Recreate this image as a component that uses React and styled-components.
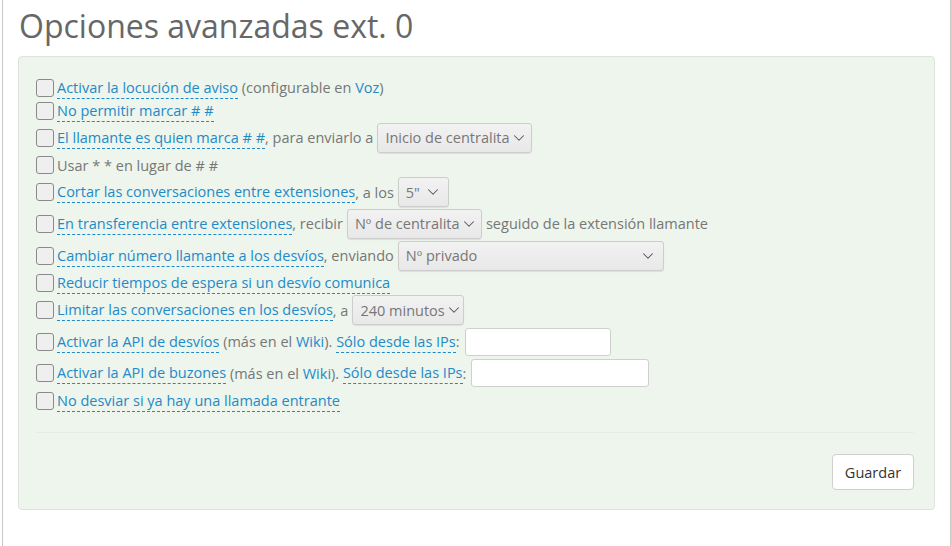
import React from 'react';
import styled, { createGlobalStyle } from 'styled-components';
import { ChevronDown } from 'lucide-react';

const GlobalStyle = createGlobalStyle`
    body {
        margin: 0;
        background: #fff;
        font-family: "Open Sans", "Noto Sans", sans-serif;
    }
`;

const Page = styled.div`
    box-sizing: border-box;
    width: 949px;
    min-height: 546px;
    margin-left: 2px;
    padding: 0 15px;
    border-left: 1px solid #c9c9c9;
    border-right: 1px solid #c9c9c9;
`;

const Title = styled.h1`
    margin: 0;
    padding: 6px 0 10px 1px;
    font-size: 32px;
    line-height: 40px;
    font-weight: 400;
    color: #676767;
`;

const Panel = styled.form`
    display: flex;
    flex-direction: column;
    background: #edf5ec;
    border: 1px solid #dde4dc;
    border-radius: 4px;
    padding: 19px 20px 19px 17px;
`;

const Row = styled.div`
    display: flex;
    align-items: center;
    min-height: ${props => props.tall ? '31.6px' : '23px'};
    font-size: 14.5px;
    color: #777;
`;

const Box = styled.span`
    flex: none;
    box-sizing: border-box;
    width: 18px;
    height: 18px;
    margin-right: 3px;
    border: 1px solid #8a8a8a;
    border-radius: 3px;
    background: #efefef;
`;

const Label = styled.span`
    display: inline-flex;
    align-items: center;
    white-space: pre;
`;

const Link = styled.span`
    color: #1f8ac9;
    border-bottom: ${props => props.plain ? 'none' : '1px dashed #1f8ac9'};
    line-height: 19px;
    padding-bottom: ${props => props.plain ? '0' : '1px'};
    margin-bottom: ${props => props.plain ? '0' : '-1px'};
`;

const Dropdown = styled.span`
    box-sizing: border-box;
    display: inline-flex;
    align-items: center;
    justify-content: space-between;
    width: ${props => props.width}px;
    height: 30px;
    margin: 0 4px 0 4px;
    padding: 0 6px 0 7px;
    border: 1px solid #cdcdcd;
    border-radius: 3px;
    background: linear-gradient(#f2f2f2, #e8e8e8);
    box-shadow: 0 1px 1px rgba(0, 0, 0, 0.08);
    color: #777;

    svg {
        flex: none;
        color: #555;
    }
`;

const Field = styled.input`
    box-sizing: border-box;
    width: ${props => props.width}px;
    height: 28px;
    margin-left: 5px;
    border: 1px solid #cfcfcf;
    border-radius: 3px;
    background: #fff;
    outline: none;
`;

const Rule = styled.hr`
    width: 100%;
    margin: 20px 0 21px;
    border: none;
    border-top: 1px solid #e6ede5;
`;

const Footer = styled.div`
    display: flex;
    justify-content: flex-end;
`;

const Button = styled.button`
    width: 82px;
    height: 36px;
    border: 1px solid #cfcfcf;
    border-radius: 4px;
    background: #fff;
    color: #333;
    font-family: inherit;
    font-size: 14.5px;
`;

const Select = ({ width, children }) => (
    <Dropdown width={width}>
        {children}
        <ChevronDown size={18} strokeWidth={1.4} />
    </Dropdown>
);

const Option = ({ tall, children }) => (
    <Row tall={tall}>
        <Box />
        <Label>{children}</Label>
    </Row>
);

const App = () => (
    <>
        <GlobalStyle />
        <Page>
            <Title>Opciones avanzadas ext. 0</Title>
            <Panel>
                <Option>
                    <Link>Activar la locución de aviso</Link> (configurable en <Link plain>Voz</Link>)
                </Option>
                <Option>
                    <Link>No permitir marcar # #</Link>
                </Option>
                <Option tall>
                    <Link>El llamante es quien marca # #</Link>, para enviarlo a
                    <Select width={155}>Inicio de centralita</Select>
                </Option>
                <Option>Usar * * en lugar de # #</Option>
                <Option tall>
                    <Link>Cortar las conversaciones entre extensiones</Link>, a los
                    <Select width={51}>5"</Select>
                </Option>
                <Option tall>
                    <Link>En transferencia entre extensiones</Link>, recibir
                    <Select width={135}>Nº de centralita</Select>seguido de la extensión llamante
                </Option>
                <Option tall>
                    <Link>Cambiar número llamante a los desvíos</Link>, enviando
                    <Select width={266}>Nº privado</Select>
                </Option>
                <Option>
                    <Link>Reducir tiempos de espera si un desvío comunica</Link>
                </Option>
                <Option tall>
                    <Link>Limitar las conversaciones en los desvíos</Link>, a
                    <Select width={112}>240 minutos</Select>
                </Option>
                <Option tall>
                    <Link>Activar la API de desvíos</Link> (más en el <Link plain>Wiki</Link>). <Link>Sólo desde las IPs</Link>:
                    <Field width={146} />
                </Option>
                <Option tall>
                    <Link>Activar la API de buzones</Link> (más en el <Link plain>Wiki</Link>). <Link>Sólo desde las IPs</Link>:
                    <Field width={178} />
                </Option>
                <Option>
                    <Link>No desviar si ya hay una llamada entrante</Link>
                </Option>
                <Rule />
                <Footer>
                    <Button type="button">Guardar</Button>
                </Footer>
            </Panel>
        </Page>
    </>
);

export default App;
